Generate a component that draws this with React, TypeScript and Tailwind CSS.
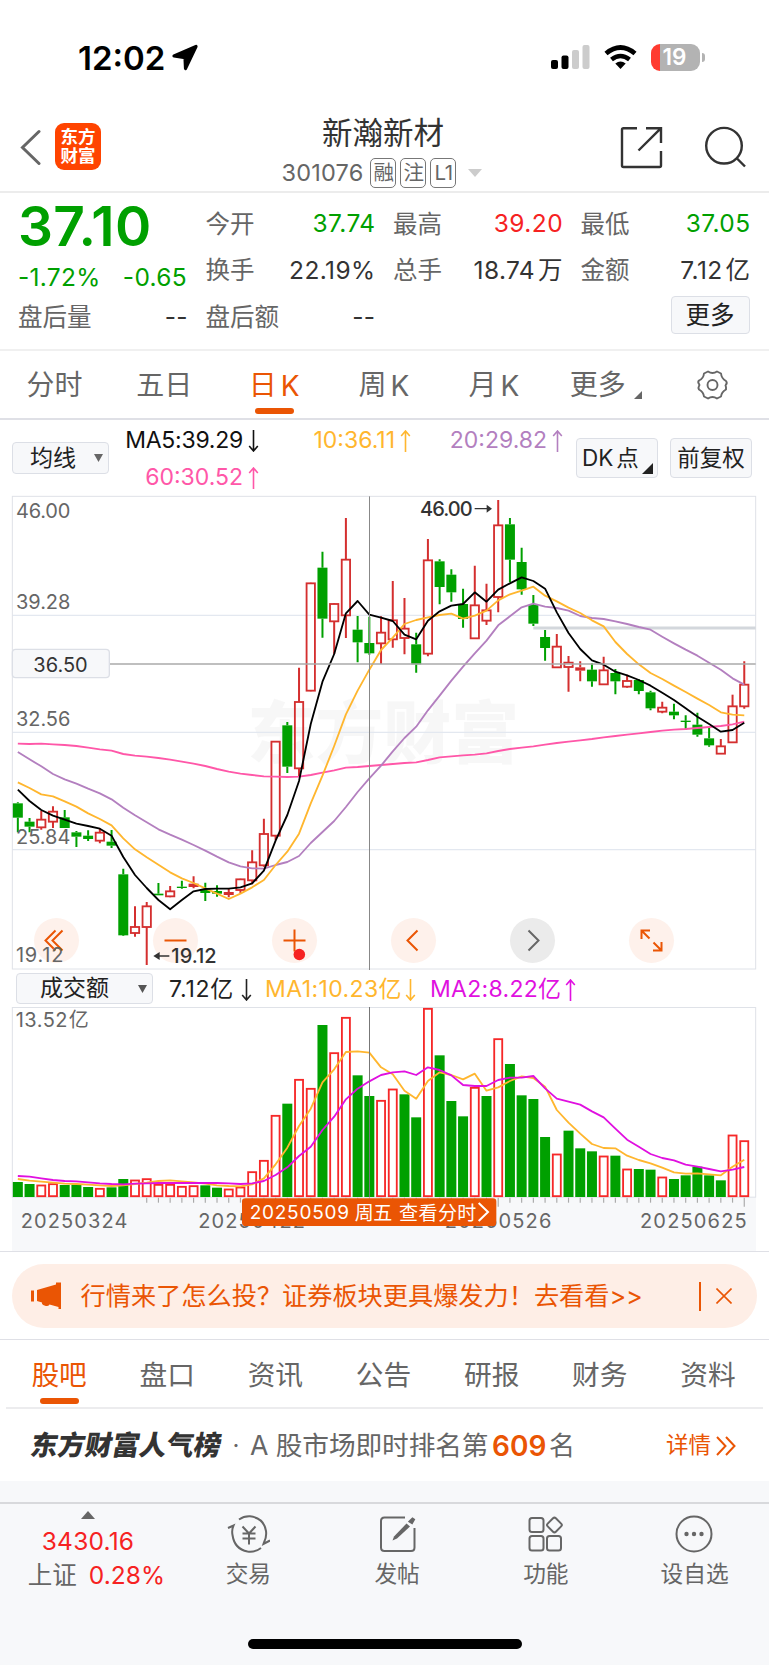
import React from "react";

type Candle = [string, number, number, number, number, number];

// kind (g = down, r = up, f = up but filled), high, body top, body bottom, low, volume top
const candles: Candle[] = [
  ["g", 937, 940, 983, 1027, 636],
  ["g", 984, 995, 1010, 1027, 642],
  ["r", 963, 989, 1012, 1019, 645],
  ["r", 949, 965, 995, 1014, 641],
  ["g", 960, 982, 1014, 1014, 645],
  ["g", 1023, 1027, 1040, 1071, 644],
  ["g", 1021, 1037, 1047, 1053, 651],
  ["r", 1015, 1028, 1052, 1060, 655],
  ["g", 1020, 1055, 1067, 1074, 652],
  ["g", 1136, 1153, 1336, 1338, 627],
  ["r", 1249, 1311, 1329, 1340, 630],
  ["r", 1236, 1249, 1311, 1425, 626],
  ["g", 1179, 1211, 1216, 1216, 643],
  ["r", 1188, 1204, 1219, 1222, 643],
  ["g", 1172, 1190, 1194, 1196, 649],
  ["f", 1159, 1181, 1191, 1195, 647],
  ["g", 1178, 1198, 1209, 1233, 646],
  ["g", 1186, 1203, 1211, 1220, 653],
  ["f", 1195, 1206, 1215, 1222, 657],
  ["r", 1166, 1168, 1200, 1210, 651],
  ["r", 1081, 1117, 1171, 1183, 605],
  ["r", 986, 1032, 1126, 1130, 571],
  ["r", 755, 755, 1037, 1050, 436],
  ["g", 696, 706, 830, 849, 401],
  ["r", 533, 636, 835, 860, 328],
  ["r", 278, 280, 602, 604, 355],
  ["g", 185, 233, 386, 443, 165],
  ["r", 340, 342, 394, 492, 248],
  ["r", 84, 209, 376, 444, 142],
  ["g", 378, 419, 457, 517, 316],
  ["g", 380, 459, 490, 494, 378],
  ["r", 379, 428, 460, 522, 391],
  ["r", 273, 391, 448, 473, 357],
  ["r", 324, 416, 444, 493, 373],
  ["g", 428, 463, 523, 548, 442],
  ["r", 147, 211, 491, 499, 115],
  ["g", 208, 214, 291, 343, 256],
  ["g", 238, 254, 307, 335, 393],
  ["g", 296, 342, 387, 413, 439],
  ["r", 227, 346, 445, 447, 352],
  ["r", 281, 361, 392, 405, 378],
  ["r", 30, 106, 321, 367, 206],
  ["g", 84, 103, 209, 277, 282],
  ["g", 173, 216, 298, 314, 376],
  ["g", 315, 345, 401, 408, 387],
  ["g", 420, 441, 474, 512, 501],
  ["r", 432, 470, 532, 534, 552],
  ["r", 498, 518, 531, 605, 482],
  ["f", 514, 532, 542, 574, 535],
  ["g", 520, 539, 574, 590, 544],
  ["r", 500, 541, 583, 585, 558],
  ["g", 537, 549, 574, 613, 557],
  ["r", 554, 573, 590, 593, 597],
  ["g", 568, 570, 603, 613, 597],
  ["g", 602, 607, 655, 661, 599],
  ["r", 635, 653, 665, 670, 621],
  ["g", 641, 665, 676, 688, 627],
  ["g", 676, 692, 696, 720, 616],
  ["g", 668, 704, 734, 740, 590],
  ["g", 714, 745, 766, 770, 616],
  ["r", 747, 769, 791, 791, 631],
  ["r", 614, 649, 757, 757, 495],
  ["r", 514, 584, 649, 656, 512],
];

// volume bars take their own colours
const volumeKinds =
  "ggrrggg" + "rggrrrr" + "rrggrrr" + "rrgrrgr" + "rggrrgg" + "rgggrgr" + "ggggrgg" + "grgrggr" + "gggggrr";

const ma5 = [
  899, 933, 960, 977, 989, 1001, 1008, 1016, 1037, 1101, 1155, 1194, 1230, 1258, 1230, 1204, 1197, 1196, 1196, 1192,
  1180, 1142, 1052, 975, 873, 702, 575, 492, 370, 333, 374, 383, 393, 434, 448, 392, 364, 347, 342, 307, 335, 299, 280,
  262, 273, 296, 367, 429, 477, 511, 524, 545, 556, 570, 587, 608, 630, 655, 680, 702, 725, 720, 698,
];
const ma10 = [
  877, 894, 913, 919, 934, 950, 970, 987, 1006, 1045, 1078, 1102, 1124, 1147, 1165, 1179, 1195, 1211, 1227, 1211, 1192,
  1170, 1125, 1085, 1031, 940, 857, 768, 673, 602, 539, 480, 443, 402, 390, 382, 375, 371, 386, 377, 362, 331, 313, 302,
  290, 317, 334, 353, 369, 391, 409, 456, 492, 523, 549, 567, 587, 606, 626, 645, 667, 674, 676,
];
const ma20 = [
  786, 808, 829, 852, 868, 881, 896, 910, 928, 953, 976, 997, 1018, 1034, 1049, 1065, 1082, 1100, 1117, 1129, 1135,
  1136, 1125, 1116, 1098, 1059, 1026, 993, 951, 906, 865, 827, 784, 744, 710, 661, 617, 572, 530, 490, 452, 406, 379,
  352, 341, 350, 354, 362, 378, 384, 387, 394, 402, 411, 419, 440, 460, 479, 497, 518, 539, 565, 584,
];
const ma60 = [
  761, 762, 761, 763, 765, 768, 773, 778, 782, 792, 797, 800, 804, 809, 815, 821, 828, 837, 845, 851, 855, 859, 860,
  861, 860, 855, 848, 841, 833, 831, 828, 825, 822, 819, 817, 810, 802, 799, 796, 794, 790, 783, 777, 773, 769, 764,
  759, 755, 751, 747, 742, 738, 734, 730, 726, 722, 719, 717, 714, 711, 708, 703, 695,
];
const volMa1 = [
  627, 632, 635, 638, 641, 642, 644, 646, 648, 646, 642, 638, 633, 631, 634, 637, 641, 646, 648, 649, 643, 625, 583,
  533, 468, 416, 337, 298, 246, 244, 248, 292, 313, 362, 386, 333, 307, 315, 328, 311, 362, 352, 333, 319, 324, 350,
  420, 458, 491, 522, 534, 535, 557, 570, 580, 593, 607, 611, 610, 613, 616, 590, 569,
];
const volMa2 = [
  618, 620, 625, 630, 633, 634, 637, 640, 642, 643, 641, 640, 639, 639, 639, 639, 639, 639, 640, 642, 640, 633, 615,
  592, 558, 530, 480, 440, 388, 356, 334, 315, 307, 304, 315, 292, 300, 316, 345, 348, 348, 330, 323, 323, 318, 355,
  386, 395, 404, 424, 442, 476, 509, 530, 552, 564, 571, 584, 590, 597, 604, 599, 591,
];

const cx = (i: number) => 53.5 + 35.15 * i;
const points = (values: number[]) => values.map((v, i) => `${cx(i)},${v}`).join(" ");

const StatusBar = () => (
  <div className="h-[100px] pt-[43px] pl-[78px] pr-[64px] flex items-start justify-between">
    <div className="flex items-center gap-[7px] h-[28px]">
      <span className="mt-[2px] text-[33px] leading-none font-semibold">12:02</span>
      <svg className="mt-px" width="27" height="27" viewBox="0 0 27 27">
        <path
          d="M24 2.500L13.500 24.500L13 13.700L2 12Z"
          fill="#000"
          stroke="#000"
          strokeWidth="3.200"
          strokeLinejoin="round"
        />
      </svg>
    </div>
    <div className="flex items-center h-[28px]">
      <svg width="39" height="24" viewBox="0 0 39 24">
        <rect x="0" y="15" width="7" height="9" rx="2" />
        <rect x="10.5" y="10.5" width="7" height="13.5" rx="2" />
        <rect x="21" y="5" width="7" height="19" rx="2" fill="#cccccc" />
        <rect x="31.5" y="0" width="7" height="24" rx="2" fill="#cccccc" />
      </svg>
      <svg className="ml-[14px]" width="33" height="24" viewBox="0 0 33 24">
        <path d="M2 8.500Q16.500 -3.500 31 8.500" fill="none" stroke="#000" strokeWidth="4.800" />
        <path d="M7.500 14.500Q16.500 7.500 25.500 14.500" fill="none" stroke="#000" strokeWidth="4.600" />
        <path d="M11.300 18.500Q16.500 14.700 21.700 18.500L16.500 24Z" />
      </svg>
      <div className="ml-[14px] w-[49px] h-[27px] rounded-[9px] overflow-hidden bg-[linear-gradient(90deg,#ff3b30_9px,#b3b3b3_9px)] flex items-center justify-center">
        <span className="mt-px mr-[2px] text-[22.500px] leading-none font-semibold text-white">19</span>
      </div>
      <div className="ml-[2px] w-[3px] h-[9px] rounded-r-full bg-[#b3b3b3]" />
    </div>
  </div>
);

const Tag = ({ children }: { children: React.ReactNode }) => (
  <span className="w-[26px] h-[30px] border-[1.500px] border-[#777] rounded-[5px] flex items-center justify-center text-[20.500px] leading-none tracking-[-0.5px]">
    {children}
  </span>
);

const Header = () => (
  <header className="h-[93px] border-b-2 border-[#ececec] flex justify-between pl-[20px] pr-[22px]">
    <div className="flex items-center pt-[3px] w-[200px]">
      <svg width="22" height="36" viewBox="0 0 22 36">
        <path d="M19 2.500L2.500 18.500L19 34.500" fill="none" stroke="#666" strokeWidth="3" strokeLinecap="round" />
      </svg>
      <div className="ml-[13px] mt-[-1px] w-[46px] h-[47px] rounded-[9px] bg-[#ff4400] text-white text-[17.500px] leading-[19px] font-bold text-center pt-[4px]">
        东方
        <br />
        财富
      </div>
    </div>
    <div className="flex flex-col items-center">
      <h1 className="mt-[17px] ml-[-1px] text-[30.500px] leading-[31px] text-[#333]">新瀚新材</h1>
      <div className="mt-[10px] ml-[-3px] flex items-center text-[#666]">
        <span className="text-[23.500px] leading-none tracking-[0.2px] mr-[7px]">301076</span>
        <div className="flex gap-[4px]">
          <Tag>融</Tag>
          <Tag>注</Tag>
          <Tag>L1</Tag>
        </div>
        <svg className="ml-[12px]" width="14" height="8" viewBox="0 0 14 8">
          <path d="M0 0H14L7 8Z" fill="#ccc" />
        </svg>
      </div>
    </div>
    <div className="flex items-start justify-end pt-[26px] w-[200px] gap-[41px]">
      <svg width="43" height="43" viewBox="0 0 43 43" fill="none" stroke="#333" strokeWidth="2.400">
        <path d="M17 2.200H3.500Q2 2.200 2 3.700V39.500Q2 41 3.500 41H39.500Q41 41 41 39.500V25" />
        <path d="M26 2.200H41V17M40.500 2.700L18.500 24.500" />
      </svg>
      <svg width="43" height="43" viewBox="0 0 43 43" fill="none" stroke="#333" strokeWidth="2.400">
        <circle cx="20" cy="19.700" r="17.800" />
        <path d="M32.500 32L41 40.500" />
      </svg>
    </div>
  </header>
);

type FieldProps = { label: string; value: string; unit?: string; color?: string };

const Field = ({ label, value, unit, color }: FieldProps) => (
  <div className="flex items-center justify-between leading-none text-[24.500px]">
    <span className="ml-[-1px] mt-px text-[#666]">{label}</span>
    <span className={"flex gap-[3px] mr-[-1px] tracking-[0.4px] " + (color || "text-[#333]")}>
      {value}
      {unit && <span>{unit}</span>}
    </span>
  </div>
);

const Quote = () => (
  <section className="h-[158px] border-b-2 border-[#f0f0f0] pt-[7px] pl-[19px] grid grid-cols-[168px_168px_168px_168px] grid-rows-[46.500px_46.500px_47.500px] gap-x-[19.500px]">
    <div className="row-span-2 text-[#00a000] leading-none">
      <div className="ml-[-1px] text-[55px] h-[51px] leading-[53px] font-semibold tracking-[0.3px]">37.10</div>
      <div className="flex justify-between text-[24.500px] tracking-[0.300px] pt-[14px]">
        <span className="ml-[-1px]">-1.72%</span>
        <span>-0.65</span>
      </div>
    </div>
    <Field label="今开" value="37.74" color="text-[#00a000]" />
    <Field label="最高" value="39.20" color="text-[#f62222]" />
    <Field label="最低" value="37.05" color="text-[#00a000]" />
    <Field label="换手" value="22.19%" />
    <Field label="总手" value="18.74" unit="万" />
    <Field label="金额" value="7.12" unit="亿" />
    <Field label="盘后量" value="--" />
    <Field label="盘后额" value="--" />
    <div className="col-start-4 flex items-start justify-end">
      <button className="mt-[3px] w-[79px] h-[38px] border border-[#dcdfe6] rounded-[4px] bg-[#f7f8fa] text-[24.500px] leading-none text-[#222]">
        更多
      </button>
    </div>
  </section>
);

const PeriodTabs = () => {
  const tabs = [["分时"], ["五日"], ["日", "K"], ["周", "K"], ["月", "K"]];
  return (
    <nav className="h-[69px] border-b-2 border-[#dfe0e6] grid grid-cols-7 text-[28px] leading-none text-[#666]">
      {tabs.map(([name, suffix]) => (
        <div
          key={name}
          className={"flex flex-col items-center pt-[20px] " + (name === "日" ? "text-[#ea5504]" : "")}
        >
          <span className="flex gap-[4px] ml-[-1px]">
            {name}
            {suffix && <span className="mt-px">{suffix}</span>}
          </span>
          {name === "日" && <span className="mt-[8px] w-[39px] h-[6px] rounded-[3px] bg-[#ea5504]" />}
        </div>
      ))}
      <div className="flex justify-center pt-[20px] pl-[3px]">
        <span>更多</span>
        <svg className="ml-[8px] mt-[20px]" width="8" height="8" viewBox="0 0 8 8">
          <path d="M8 0V8H0Z" fill="#666" />
        </svg>
      </div>
      <div className="flex justify-center pt-[18px] pr-[3px]">
        <svg width="33" height="32" viewBox="0 0 33 32" fill="none" stroke="#666" strokeWidth="1.900">
          <path
            d="M12 2.500 Q16.500 5.500 21 2.500 L25 4.500 Q25.500 9.500 30 12 Q31.500 14 30 15.500 Q29 16.500 30 18 L30 20.500 Q25.500 23 25 27.500 L21 29.500 Q16.500 26.500 12 29.500 L8 27.500 Q7.500 23 3 20.500 Q2 18.500 3 17 Q4 16 3 15 Q1.500 13 3 11.500 Q7.500 9.500 8 4.500 Z"
            strokeLinejoin="round"
          />
          <circle cx="16.500" cy="16" r="5" />
        </svg>
      </div>
    </nav>
  );
};

const Arrow = ({ up }: { up?: boolean }) => (
  <svg width="11" height="22" viewBox="0 0 11 22" fill="none" stroke="currentColor" strokeWidth="1.600">
    {up ? <path d="M5.500 22V1M1.200 6L5.500 1L9.800 6" /> : <path d="M5.500 0V21M1.200 16L5.500 21L9.800 16" />}
  </svg>
);

const MaValue = ({ text, up, color }: { text: string; up?: boolean; color: string }) => (
  <div className={"flex items-center justify-end gap-[5px] pr-[2px] text-[23px] leading-none " + color}>
    <span>{text}</span>
    <Arrow up={up} />
  </div>
);

const MaRow = () => (
  <div className="h-[76px] flex pl-[12px] pr-[16px] text-[#222]">
    <button className="mt-[22px] w-[97px] h-[32px] shrink-0 border border-[#dcdfe6] rounded-[4px] bg-[#f7f8fa] flex items-center text-[23px] leading-none pl-[17px] gap-[18px]">
      均线
      <svg width="9" height="8" viewBox="0 0 9 8">
        <path d="M0 0H9L4.500 8Z" fill="#666" />
      </svg>
    </button>
    <div className="mt-[2px] w-[456px] shrink-0 grid grid-cols-3 grid-rows-[37px_37px]">
      <MaValue text="MA5:39.29" color="text-[#111] tracking-[-0.250px]" />
      <MaValue text="10:36.11" up color="text-[#ffb62e]" />
      <MaValue text="20:29.82" up color="text-[#b37fbf]" />
      <MaValue text="60:30.52" up color="text-[#ff57a8]" />
    </div>
    <div className="mt-[18px] ml-[11px] flex gap-[12px] text-[22.500px] leading-none">
      <button className="w-[82px] h-[40px] border border-[#dcdfe6] rounded-[4px] bg-[#f7f8fa] flex items-center pl-[5px]">
        <span className="flex gap-[3px] w-[58px]">
          DK<span>点</span>
        </span>
        <svg className="mt-[20px] ml-[2px] shrink-0" width="11" height="11" viewBox="0 0 11 11">
          <path d="M11 0V11H0Z" fill="#222" />
        </svg>
      </button>
      <button className="w-[82px] h-[40px] border border-[#dcdfe6] rounded-[4px] bg-[#f7f8fa] text-center">前复权</button>
    </div>
  </div>
);

const ControlButton = ({ gray, children }: { gray?: boolean; children: React.ReactNode }) => (
  <button
    className={
      "w-[45px] h-[45px] rounded-full flex items-center justify-center " +
      (gray ? "bg-[#ebebeb] text-[#666]" : "bg-[#fef1eb] text-[#ea5504]")
    }
  >
    <svg width="25" height="25" viewBox="0 0 25 25" fill="none" stroke="currentColor" strokeWidth="2" overflow="visible">
      {children}
    </svg>
  </button>
);

const Controls = () => (
  <div className="absolute left-[33.500px] top-[427.500px] flex gap-[74.200px]">
    <ControlButton>
      <path d="M11.500 2.500L1.500 12.500L11.500 22.500M18.500 2.500L8.500 12.500L18.500 22.500" />
    </ControlButton>
    <ControlButton>
      <path d="M1.500 12.500H23.500" />
    </ControlButton>
    <ControlButton>
      <path d="M1.500 12.500H23.500M12.500 1.500V23.500" />
      <circle cx="17.300" cy="26.500" r="5.800" fill="#f62222" stroke="none" />
    </ControlButton>
    <ControlButton>
      <path d="M16.500 2.500L6.500 12.500L16.500 22.500" />
    </ControlButton>
    <ControlButton gray>
      <path d="M8.500 2.500L18.500 12.500L8.500 22.500" />
    </ControlButton>
    <ControlButton>
      <path d="M2.500 11V2.500H11M2.500 2.500L10.500 10.500M22.500 14V22.500H14M22.500 22.500L14.500 14.500" />
    </ControlButton>
  </div>
);

const axisLabels = [
  { text: "46.00", y: 85 },
  { text: "39.28", y: 356 },
  { text: "32.56", y: 709 },
  { text: "25.84", y: 1062 },
  { text: "19.12", y: 1415 },
];

const PriceChart = () => (
  <div className="relative h-[480px] mt-[-6px]">
    <Controls />
    <svg className="relative block pointer-events-none" width="769" height="480" viewBox="0 0 2307 1440">
      <text
        x="742"
        y="804"
        fontSize="204"
        fontWeight="900"
        fill="#000"
        fillOpacity="0.03"
        textLength="816"
        className="font-['Noto_Sans_CJK_SC',sans-serif]"
      >
        东方财富
      </text>
      <path d="M37 376H2267M37 727H2267M37 1079H2267" stroke="#e3e8f0" strokeWidth="4" />
      <rect x="37" y="19" width="2230" height="1418" fill="none" stroke="#dfe2e8" strokeWidth="3" />
      <path d="M1600 414H2267" stroke="#d3d7dc" strokeWidth="9" />
      {candles.map(([kind, high, top, bottom, low], i) => {
        const color = kind === "g" ? "#00a000" : "#d42f2f";
        return (
          <g key={i} stroke={color}>
            <path d={`M${cx(i)} ${high}V${top}M${cx(i)} ${bottom}V${low}`} strokeWidth="6" />
            {kind === "r" ? (
              <rect x={cx(i) - 12.500} y={top} width="25" height={bottom - top} fill="none" strokeWidth="5.500" />
            ) : (
              <rect x={cx(i) - 15} y={top} width="30" height={bottom - top} fill={color} stroke="none" />
            )}
          </g>
        );
      })}
      <g fill="none" strokeWidth="5.500" strokeLinejoin="round">
        <polyline points={points(ma60)} stroke="#ff57a8" />
        <polyline points={points(ma20)} stroke="#b37fbf" />
        <polyline points={points(ma10)} stroke="#ffb62e" />
        <polyline points={points(ma5)} stroke="#000" />
      </g>
      <path d="M37 522H2267" stroke="#aaa" strokeWidth="4" />
      <path d="M1108.500 19V1440" stroke="#888" strokeWidth="3" />
      <g fontSize="60" fill="#666">
        {axisLabels.map((label) => (
          <text key={label.text} x="48" y={label.y} textLength={label.text === "19.12" ? 142 : 163}>
            {label.text}
          </text>
        ))}
      </g>
      <rect x="37" y="478" width="291" height="85" rx="10" fill="#f7f8fa" stroke="#dcdfe6" strokeWidth="4" />
      <text x="100" y="545" fontSize="60" fill="#333" textLength="163">
        36.50
      </text>
      <g fill="#333" fontSize="60" fontWeight="500">
        <text x="1260" y="77" textLength="158">
          46.00
        </text>
        <text x="514" y="1419" textLength="136">
          19.12
        </text>
        <path d="M1424 56H1465M508 1398H475" stroke="#333" strokeWidth="4" />
        <path d="M1460 44L1476 56L1460 68ZM479 1386L460 1398L479 1410Z" />
      </g>
    </svg>
  </div>
);

const VolumeLegend = () => (
  <div className="h-[37px] pt-[4px] flex items-start text-[23px] leading-none">
    <button className="ml-[16px] mt-[-1px] w-[137px] h-[31px] shrink-0 border border-[#dcdfe6] rounded-[4px] bg-[#f7f8fa] text-[#222] flex items-center pl-[23px] gap-[29px]">
      成交额
      <svg width="9" height="8" viewBox="0 0 9 8">
        <path d="M0 0H9L4.500 8Z" fill="#555" />
      </svg>
    </button>
    <div className="h-[31px] ml-[16px] w-[83px] flex items-center justify-between text-[#222] tracking-[0.800px]">
      7.12亿
      <Arrow />
    </div>
    <div className="h-[31px] ml-[13px] w-[151px] flex items-center justify-between text-[#ffb62e] tracking-[0.400px]">
      MA1:10.23亿
      <Arrow />
    </div>
    <div className="h-[31px] ml-[14px] w-[146px] flex items-center justify-between text-[#e010e0] tracking-[0.300px]">
      MA2:8.22亿
      <Arrow up />
    </div>
  </div>
);

const VolumeChart = () => (
  <svg className="block" width="769" height="244" viewBox="0 111 2307 732">
    <rect x="36" y="682" width="2232" height="161" fill="#f7f8fa" />
    <rect x="37" y="112.500" width="2230" height="569" fill="none" stroke="#dfe2e8" strokeWidth="3" />
    {candles.map(([, , , , , top], i) =>
      volumeKinds[i] === "g" ? (
        <rect key={i} x={cx(i) - 15} y={top} width="30" height={681 - top} fill="#00a000" />
      ) : (
        <rect
          key={i}
          x={cx(i) - 12}
          y={top + 1.500}
          width="24"
          height={677 - top}
          fill="#fff"
          stroke="#f62828"
          strokeWidth="5.500"
        />
      )
    )}
    {candles.map((_, i) =>
      i < 11 ? null : (
        <path key={i} d={`M${cx(i)} 683V${i === 41 || i === 62 ? 710 : 698}`} stroke="#aaa" strokeWidth="3.500" />
      )
    )}
    <g fill="none" strokeWidth="5.500" strokeLinejoin="round">
      <polyline points={points(volMa1)} stroke="#ffb62e" />
      <polyline points={points(volMa2)} stroke="#e010e0" />
    </g>
    <path d="M1108.500 111V682" stroke="#777" strokeWidth="3" />
    <g fontSize="60" fill="#666">
      <text x="47" y="171" letterSpacing="1.500">
        13.52<tspan x="206">亿</tspan>
      </text>
      <text x="62" y="774" textLength="320">
        20250324
      </text>
      <text x="595" y="774" textLength="320">
        20250422
      </text>
      <text x="1334" y="774" textLength="320">
        20250526
      </text>
      <text x="1920" y="774" textLength="320">
        20250625
      </text>
    </g>
    <rect x="726" y="685" width="763" height="83" rx="10" fill="#ea5504" />
    <g fontSize="57" fill="#fff">
      <text x="749" y="748" textLength="298">
        20250509
      </text>
      <text x="1064" y="749" textLength="113">
        周五
      </text>
      <text x="1197" y="749" textLength="232">
        查看分时
      </text>
    </g>
    <path d="M1436 699L1464 726L1436 753" fill="none" stroke="#fff" strokeWidth="6" />
  </svg>
);

const Banner = () => (
  <div className="h-[89px] border-y border-[#dfe0e6] pt-[12px] px-[12px]">
    <div className="h-[64px] rounded-full bg-[#feeee6] flex items-center pl-[19px] text-[#ea5504]">
      <svg width="31" height="28" viewBox="0 0 31 28" fill="#ea5504">
        <rect x="0" y="8.500" width="3" height="11" />
        <path d="M6 8L25 2.500V0.500H30V27H27.500V25L18.500 22.500Q17 25 13.500 23.500Q10.500 22.500 11 20.500L6 19Z" />
      </svg>
      <span className="mt-px ml-[18.500px] w-[600px] text-[25.200px] leading-none whitespace-nowrap">
        行情来了怎么投？证券板块更具爆发力！去看看&gt;&gt;
      </span>
      <span className="ml-[18.500px] w-[1.500px] h-[29px] bg-[#ea5504]" />
      <svg className="ml-[15px]" width="16" height="16" viewBox="0 0 17 17">
        <path d="M0.500 0.500L16.500 16.500M16.500 0.500L0.500 16.500" stroke="#ea5504" strokeWidth="1.700" />
      </svg>
    </div>
  </div>
);

const InfoTabs = () => {
  const tabs = ["股吧", "盘口", "资讯", "公告", "研报", "财务", "资料"];
  return (
    <nav className="mx-[6px] h-[69px] border-b-2 border-[#ececee] grid grid-cols-7 text-[27.700px] leading-none text-[#666]">
      {tabs.map((tab, i) => (
        <div key={tab} className={"flex flex-col items-center pt-[22px] pr-[2px] " + (i === 0 ? "text-[#ea5504]" : "")}>
          {tab}
          {i === 0 && <span className="mt-[8px] ml-px w-[39px] h-[6px] rounded-[3px] bg-[#ea5504]" />}
        </div>
      ))}
    </nav>
  );
};

const RankRow = () => (
  <div className="h-[72px] flex items-center pt-px pl-[31px] pr-[33px] leading-none text-[#666] whitespace-nowrap">
    <span className="w-[191px] text-[27.200px] font-black text-[#333] skew-x-[-10deg]">东方财富人气榜</span>
    <span className="w-[28px] text-center text-[24px]">·</span>
    <span className="w-[242px] text-[26.700px] tracking-[-0.1px]">A 股市场即时排名第</span>
    <span className="w-[57px] text-[28px] font-semibold text-[#ea5504]">609</span>
    <span className="text-[26px]">名</span>
    <span className="ml-auto text-[22.500px] text-[#ea5504]">详情</span>
    <svg className="ml-[5px]" width="20" height="20" viewBox="0 0 20 20">
      <path d="M1 1L9.500 10L1 19M10 1L18.500 10L10 19" fill="none" stroke="#ea5504" strokeWidth="2" />
    </svg>
  </div>
);

const NavItem = ({ label, children }: { label: string; children: React.ReactNode }) => (
  <div className="flex-1 flex flex-col items-center pt-[9px] text-[#666]">
    <svg width="43" height="40" viewBox="0 0 43 40" fill="none" stroke="#666" strokeWidth="2">
      {children}
    </svg>
    <span className="mt-[10px] text-[22.700px] leading-none">{label}</span>
  </div>
);

const BottomNav = () => (
  <footer className="h-[163px] border-t-2 border-[#d8d9dc] bg-[#f7f8fa]">
    <div className="flex h-[135px]">
      <div className="w-[174px] pl-[2px] flex flex-col items-center leading-none text-[24.500px]">
        <svg className="mt-[7px]" width="14" height="8" viewBox="0 0 14 8">
          <path d="M0 8H14L7 0Z" fill="#666" />
        </svg>
        <span className="mt-[10px] text-[#f62222] tracking-[0.2px]">3430.16</span>
        <span className="ml-[17px] mt-[9px] flex gap-[12px] whitespace-nowrap">
          <span className="text-[#666]">上证</span>
          <span className="text-[#f62222] tracking-[0.1px]">0.28%</span>
        </span>
      </div>
      <NavItem label="交易">
        <path d="M12 6.500Q17 3 23 3.300Q37 5 39 18Q39.800 24 37 29.500L36.500 31L43 27.500" />
        <path d="M34 35Q28 39.500 20.500 38.500Q7.500 36 5.500 22Q4.500 17 6.500 12.500L1 15" />
        <path d="M15.500 13.500L22 20.500L28.500 13.500M22 20.500V31.500M15.500 20.500H28.500M15.500 25.500H28.500" />
      </NavItem>
      <NavItem label="发帖">
        <path d="M29 4.500H8.500Q5 4.500 5 8V34.500Q5 38 8.500 38H35Q38.500 38 38.500 34.500V15" />
        <path d="M16.500 27.500L18 23.500L30.500 10.500L34 13.500L21 25.500Z" fill="#666" stroke="none" />
        <path d="M33.500 8.500L36.500 5.500L38 6.500L36 10Z" fill="#666" />
      </NavItem>
      <NavItem label="功能">
        <rect x="5.500" y="5" width="14" height="14" rx="2.500" />
        <rect x="5.500" y="23" width="14" height="14.500" rx="2.500" />
        <rect x="23" y="23" width="14" height="14.500" rx="2.500" />
        <rect x="24.700" y="6.300" width="11.500" height="11.500" rx="2" transform="rotate(45 30.500 12)" />
      </NavItem>
      <NavItem label="设自选">
        <circle cx="21" cy="21" r="17.500" />
        <g fill="#666" stroke="none">
          <circle cx="13.500" cy="21" r="2.200" />
          <circle cx="21" cy="21" r="2.200" />
          <circle cx="28.500" cy="21" r="2.200" />
        </g>
      </NavItem>
    </div>
    <div className="mx-auto w-[274px] h-[10px] rounded-full bg-black" />
  </footer>
);

export default function App() {
  return (
    <main className="w-[769px] h-[1665px] overflow-hidden bg-white font-['Inter','Noto_Sans_CJK_SC',sans-serif]">
      <StatusBar />
      <Header />
      <Quote />
      <PeriodTabs />
      <MaRow />
      <PriceChart />
      <VolumeLegend />
      <VolumeChart />
      <Banner />
      <InfoTabs />
      <RankRow />
      <div className="h-[21px] bg-[#f7f8fa]" />
      <BottomNav />
    </main>
  );
}
